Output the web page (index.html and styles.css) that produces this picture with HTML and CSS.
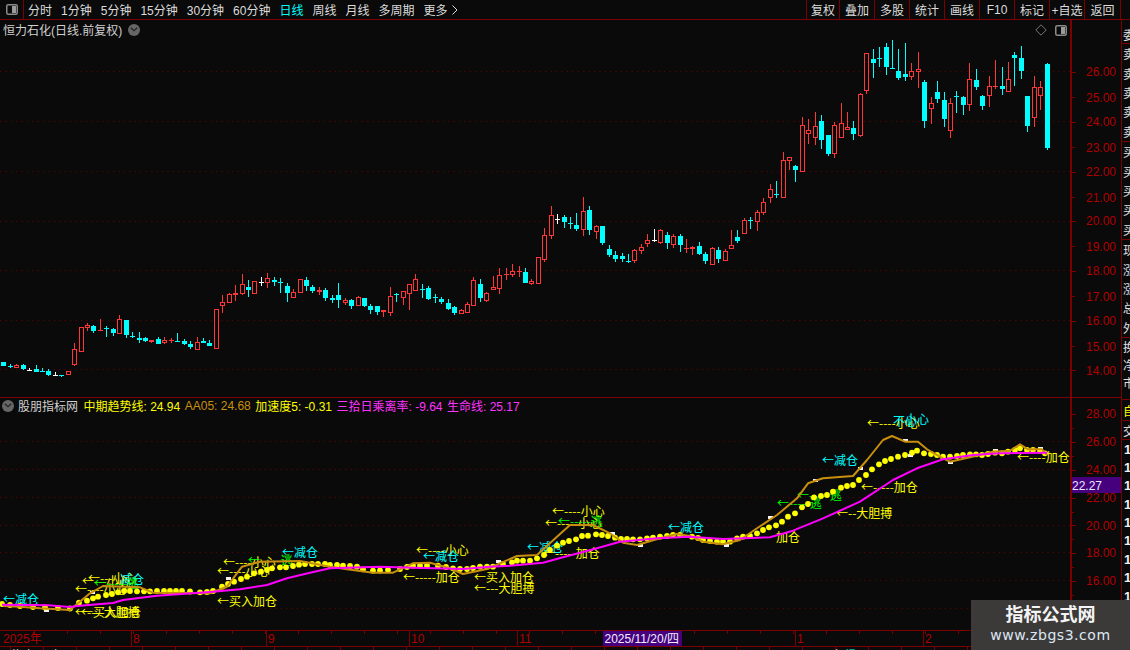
FILE: index.html
```html
<!DOCTYPE html>
<html lang="zh-CN">
<head>
<meta charset="utf-8">
<title>恒力石化 日线</title>
<link rel="stylesheet" href="styles.css">
</head>
<body>
<div class="app">
  <header class="topbar">
    <div class="logo-box">
      <svg class="panel-icon" viewBox="0 0 12 11"><rect x="0.75" y="0.75" width="10.5" height="9.5" rx="1.5" fill="none" stroke="#8a8a8a" stroke-width="1.5"/><rect x="6" y="2" width="4" height="7" fill="#9a9a9a"/></svg>
    </div>
    <nav class="periods">
      <span>分时</span><span>1分钟</span><span>5分钟</span><span>15分钟</span><span>30分钟</span><span>60分钟</span><span class="active">日线</span><span>周线</span><span>月线</span><span>多周期</span><span class="more">更多<svg class="more-arrow" viewBox="0 0 6 10"><path d="M0.5 0.5 L5 5 L0.5 9.5" fill="none" stroke="#dcdcdc"/></svg></span>
    </nav>
    <nav class="tools">
      <span>复权</span><span>叠加</span><span>多股</span><span>统计</span><span>画线</span><span>F10</span><span>标记</span><span>+自选</span><span class="back">返回</span>
    </nav>
  </header>
  <div class="workspace">
    <div class="charts">
      <section class="pane pane-main">
        <div class="plot">
          <svg id="candles" class="plot-svg" viewBox="0 20 1070 377"></svg>
          <div class="title-row">
            <span class="stock-name">恒力石化(日线.前复权)</span>
            <span class="round-icon"><svg viewBox="0 0 8 5"><path d="M0.8 0.8 L4 3.8 L7.2 0.8" fill="none" stroke="#222" stroke-width="1.2"/></svg></span>
          </div>
          <div class="plot-tools">
            <svg class="diamond" viewBox="0 0 12 12"><path d="M6 0.8 L11.2 6 L6 11.2 L0.8 6 Z" fill="none" stroke="#777"/></svg>
            <svg class="panel-icon" viewBox="0 0 12 11"><rect x="0.75" y="0.75" width="10.5" height="9.5" rx="1.5" fill="none" stroke="#8a8a8a" stroke-width="1.5"/><rect x="6" y="2" width="4" height="7" fill="#9a9a9a"/></svg>
          </div>
        </div>
        <svg id="axis-main" class="axis" viewBox="1072 20 49 377"></svg>
      </section>
      <section class="pane pane-indicator">
        <div class="plot">
          <svg id="indicator" class="plot-svg" viewBox="0 398 1070 232"></svg>
          <div class="legend">
            <span class="round-icon"><svg viewBox="0 0 8 5"><path d="M0.8 0.8 L4 3.8 L7.2 0.8" fill="none" stroke="#222" stroke-width="1.2"/></svg></span>
            <span class="legend-name">股朋指标网</span>
            <span class="yellow">中期趋势线: 24.94</span>
            <span class="gold">AA05: 24.68</span>
            <span class="yellow">加速度5: -0.31</span>
            <span class="magenta">三拾日乘离率: -9.64</span>
            <span class="magenta">生命线: 25.17</span>
          </div>
        </div>
        <svg id="axis-indicator" class="axis" viewBox="1072 398 49 232"></svg>
      </section>
      <svg id="timeline" class="timeline" viewBox="0 631 1121 15"></svg>
      <div class="footer">
        <svg id="footer-ticks" class="footer-svg" viewBox="0 647 1121 3"></svg>
      </div>
    </div>
    <aside class="side">
      <div class="side-group group-a"><span>委</span></div>
      <div class="side-group group-b"><span>卖</span><span>卖</span><span>卖</span><span>卖</span><span>卖</span></div>
      <div class="side-group group-b"><span>买</span><span>买</span><span>买</span><span>买</span><span>买</span></div>
      <div class="side-group group-b"><span>现</span><span>涨</span><span>涨</span><span>总</span><span>外</span></div>
      <div class="side-group group-c"><span>换</span><span>净</span><span>市</span></div>
      <div class="side-group group-d"><span class="yellow">自</span></div>
      <div class="side-group group-e"><span>交</span></div>
      <div class="side-group group-f"><span>1</span><span>1</span><span>1</span><span>1</span><span>1</span><span>1</span><span>1</span><span>1</span><span>1</span><span>1</span><span>1</span></div>
    </aside>
  </div>
  <div class="watermark">
    <div class="wm-title">指标公式网</div>
    <div class="wm-url">www.zbgs3.com</div>
  </div>
</div>
<script src="script.js"></script>
</body>
</html>
```
FILE: styles.css
```css
* { box-sizing: border-box; }
html, body { margin: 0; padding: 0; width: 1130px; height: 650px; overflow: hidden; background: #0a0a0a; }
body { font-family: "Liberation Sans", "Noto Sans CJK SC", sans-serif; color: #dcdcdc; }
.app { position: relative; width: 1130px; height: 650px; display: flex; flex-direction: column; }

.topbar { height: 20px; flex: none; display: flex; align-items: stretch; border-bottom: 1px solid #7c0000; }
.logo-box { width: 24px; flex: none; display: flex; align-items: center; justify-content: center; border-right: 1px solid #7c0000; }
.panel-icon { width: 12px; height: 11px; display: block; }
.periods { display: flex; align-items: center; gap: 9px; padding-left: 4px; font-size: 12px; flex: 1; }
.periods .active { color: #00ffff; }
.more { display: inline-flex; align-items: center; gap: 4px; }
.more-arrow { width: 6px; height: 10px; display: block; }
.tools { display: flex; align-items: stretch; font-size: 12px; margin-right: 9px; }
.tools span { width: 35px; display: flex; align-items: center; justify-content: center; border-left: 1px solid #7c0000; }
.tools .back { width: 37px; border-right: 1px solid #7c0000; }
.tools span:first-child { width: 33px; }

.workspace { flex: 1; display: flex; min-height: 0; }
.charts { width: 1121px; flex: none; display: flex; flex-direction: column; }
.pane { display: flex; flex: none; border-bottom: 1px solid #7c0000; }
.pane-main { height: 378px; }
.pane-indicator { height: 233px; }
.plot { position: relative; width: 1070px; flex: none; overflow: hidden; }
.plot-svg { display: block; width: 1070px; height: 100%; }
.axis { display: block; width: 51px; height: 100%; flex: none; border-left: 2px solid #7c0000; }

.title-row { position: absolute; left: 3px; top: 2px; height: 15px; display: flex; align-items: center; gap: 6px; font-size: 12px; color: #d0d0d0; }
.round-icon { width: 12px; height: 12px; border-radius: 50%; background: #666; display: flex; align-items: center; justify-content: center; flex: none; }
.round-icon svg { width: 8px; height: 5px; display: block; }
.plot-tools { position: absolute; right: 3px; top: 4px; display: flex; align-items: center; gap: 8px; }
.diamond { width: 12px; height: 12px; display: block; }

.legend { position: absolute; left: 2px; top: 0; height: 15px; display: flex; align-items: center; font-size: 12px; white-space: nowrap; gap: 4.5px; }
.legend-name { color: #d0d0d0; margin: 0 1px 0 -0.5px; }
.yellow { color: #ffff00; }
.gold { color: #c8900c; }
.magenta { color: #ff33ff; }

.timeline { display: block; width: 1121px; height: 16px; flex: none; border-bottom: 1px solid #7c0000; }
.footer { flex: 1; overflow: hidden; min-height: 0; }
.footer-svg { display: block; width: 1121px; height: 3px; }

.side { width: 9px; flex: none; border-left: 1px solid #7c0000; overflow: hidden; font-size: 12px; color: #e0e0e0; }
.side-group { display: flex; flex-direction: column; border-bottom: 1px solid #7c0000; padding-left: 1px; white-space: nowrap; }
.side-group span { display: flex; align-items: center; flex: 1; }
.group-a { height: 24px; padding-top: 6px; }
.group-b { height: 98px; }
.group-c { height: 62px; padding-bottom: 8px; }
.group-d { height: 21px; }
.group-e { height: 19px; }
.group-f { border-bottom: 0; height: 202px; font-weight: 700; font-size: 13px; color: #f0f0f0; }
.group-f span { padding-left: 1px; }

.watermark { position: absolute; right: 0; bottom: 0; width: 159px; height: 50px; background: #3c3a39; display: flex; flex-direction: column; align-items: center; padding-top: 4px; }
.wm-title { font-size: 18px; line-height: 22px; font-weight: 700; color: #f4f4f4; }
.wm-url { line-height: 19px; color: #dce8f4; letter-spacing: 0.55px; font-family: "DejaVu Sans", sans-serif; font-size: 14px; }

svg text { font-family: "Liberation Sans", "Noto Sans CJK SC", sans-serif; }
.axis-label { font-size: 12px; fill: #b00000; }
.axis-current { font-size: 12px; fill: #e8e8ff; }
svg text.signal { font-size: 12px; font-family: "Noto Sans CJK SC", sans-serif; }
.time-label { font-size: 12px; fill: #b00000; }
.time-current { font-size: 12px; fill: #f0f0ff; }
.clip-text { font-size: 11px; }
```
FILE: script.js
```js
var NS = 'http://www.w3.org/2000/svg';
function el(parent, name, attrs, text) {
  var n = document.createElementNS(NS, name);
  for (var k in attrs) n.setAttribute(k, attrs[k]);
  if (text) n.textContent = text;
  parent.appendChild(n);
  return n;
}
var GRID = '#6e0000', TICK = '#7c0000', BG = '#0a0a0a';
function dotted(svg, y, w) {
  el(svg, 'line', { x1: 0, x2: w, y1: y + 0.5, y2: y + 0.5, stroke: GRID, 'stroke-dasharray': '1 4.4' });
}

/* ---- candles: [type, bodyTop, bodyBottom, high, low] in screen rows measured from a base row, thirds of a pixel ---- */
var R = 'r', C = 'c', W = 'w';
var groups = [
  [300, [[C,186,198,186,198],[C,197,200,192,204],[R,195,203,192,205],[C,195,207,192,210],[W,210,212,203,212],[C,207,216,196,216],[C,213,215,205,216],[C,213,225,208,228],[W,225,227,216,228],[C,225,227,225,231],[R,214,224,214,224],[R,148,194,129,198],[R,82,155,82,155],[R,76,83,70,92],[C,78,93,75,99],[R,91,93,58,93],[C,84,86,78,110],[C,87,99,84,108],[R,58,102,45,102],[C,60,105,60,114],[C,108,111,96,114],[C,114,120,96,129],[C,114,123,111,126],[R,121,125,121,129],[C,117,132,111,132],[R,120,128,111,132],[R,120,122,114,129],[C,123,125,99,126],[C,123,132,117,135],[C,131,141,123,147],[R,127,149,111,150],[C,123,129,114,130],[C,129,137,120,138],[R,28,146,28,146]]],
  [190, [[R,337,349,316,369],[R,313,338,310,338],[R,309,314,285,333],[R,283,312,252,314],[C,291,300,270,321],[R,274,311,274,311],[W,275,277,261,288],[R,265,278,250,294],[C,270,275,261,288],[C,276,278,264,309],[C,288,308,279,336],[R,307,323,297,323],[R,268,308,268,308],[C,270,288,261,303],[C,291,303,285,309],[R,300,305,291,315],[C,300,324,294,333],[C,324,330,315,339],[C,315,330,279,354],[R,331,339,324,345],[C,330,348,327,357],[R,322,348,318,348],[C,324,348,324,351],[C,348,360,342,372],[C,348,366,348,375],[R,361,367,361,381],[R,319,369,291,378],[C,312,314,309,336],[R,304,323,304,345],[R,283,311,283,360],[R,268,302,252,302],[C,297,299,282,324],[C,294,327,288,330],[C,321,323,312,339],[C,327,336,321,342],[C,339,357,327,360],[C,351,369,348,375],[R,361,371,358,372],[R,343,368,336,369],[R,271,347,261,347],[C,282,324,267,336],[R,310,332,306,336],[R,292,299,258,299],[R,256,298,235,312]]],
  [120, [[R,463,466,444,480],[R,454,464,432,470],[R,454,456,438,470],[C,456,489,444,489],[R,483,492,476,495],[R,412,492,412,492],[R,346,419,324,426],[R,286,347,258,357],[W,296,298,282,312],[C,291,306,285,324],[C,310,312,291,327],[C,315,327,279,333],[R,274,330,231,348],[C,270,330,258,345],[R,318,335,315,357],[C,318,369,318,375],[C,387,405,375,411],[C,405,417,393,426],[C,408,417,399,426],[C,423,425,402,429],[R,391,423,387,429],[R,381,392,372,402],[R,361,372,342,381],[W,361,363,327,366],[R,331,369,327,372],[C,345,369,336,387],[R,349,375,342,384],[C,348,375,342,396],[R,385,387,357,399],[R,382,388,378,405],[C,378,402,366,405],[C,402,423,396,432],[R,385,435,382,435],[C,390,417,381,429],[R,393,423,387,423],[R,376,386,330,386],[C,351,363,330,369],[R,300,341,294,341],[C,300,302,291,327],[R,277,305,270,333],[R,247,278,234,285],[R,208,234,192,249],[C,222,224,183,234],[R,121,233,96,233],[R,112,122,112,150],[C,138,150,135,186]]],
  [0, [[R,376,515,351,515],[R,391,401,357,431],[R,379,415,336,435],[C,364,419,345,446],[C,406,462,406,468],[R,376,463,366,473],[R,370,415,309,415],[R,382,391,336,391],[C,385,401,364,419],[R,283,409,279,412],[R,160,274,160,282],[C,178,190,148,233],[C,175,178,142,202],[C,142,202,130,224],[C,205,207,121,208],[C,214,233,148,239],[C,223,230,130,242],[R,214,232,190,239],[R,208,217,157,265],[C,247,362,241,383],[R,310,328,292,373],[C,277,298,244,310],[C,301,358,277,380],[R,310,394,295,415],[C,289,291,274,340],[C,292,314,289,344],[R,238,316,190,334],[C,241,262,208,271],[C,289,319,286,331],[R,259,289,229,322],[R,259,261,181,268],[C,259,266,202,286],[R,238,277,187,277],[C,166,175,157,259],[C,175,212,139,238],[C,289,379,289,397],[R,262,355,229,382],[R,262,289,244,331],[C,193,445,190,449]]]
];
var COLORS = { r: '#ff3636', c: '#00ffff', w: '#ffffff' };
var candles = document.getElementById('candles');
[71, 121, 171, 221, 270, 320, 369].forEach(function (y) { dotted(candles, y, 1070); });
var layer = el(candles, 'g', { 'shape-rendering': 'crispEdges' });
var index = 0;
groups.forEach(function (g) {
  g[1].forEach(function (d) {
    var cx = Math.round(3.3 + index * 6.44), col = COLORS[d[0]];
    var top = Math.round(g[0] + d[1] / 3), bot = Math.round(g[0] + d[2] / 3);
    var hi = Math.round(g[0] + d[3] / 3), lo = Math.round(g[0] + d[4] / 3);
    if (bot <= top) bot = top + 1;
    if (lo > hi) el(layer, 'rect', { x: cx, y: hi, width: 1, height: lo - hi, fill: col });
    if (d[0] === 'r' && bot - top > 2) {
      el(layer, 'rect', { x: cx - 1.5, y: top + 0.5, width: 4, height: bot - top - 1, fill: BG, stroke: col });
    } else {
      el(layer, 'rect', { x: cx - 2, y: top, width: 5, height: bot - top, fill: col });
    }
    index++;
  });
});

/* ---- axes ---- */
function axis(id, ticks, labels) {
  var svg = document.getElementById(id);
  ticks.forEach(function (t) {
    el(svg, 'rect', { x: 1072, y: Math.round(t[0]), width: t[1], height: 1, fill: TICK, 'shape-rendering': 'crispEdges' });
  });
  labels.forEach(function (l) {
    el(svg, 'text', { x: 1086, y: l[0] + 4.5, 'class': 'axis-label' }, l[1]);
  });
  return svg;
}
var mainTicks = [], mainLabels = [];
[71.7, 96.7, 121.7, 146.7, 171.7, 196.7, 220.5, 245.5, 270.5, 295.5, 320.5, 345.5, 370].forEach(function (y, i) {
  mainTicks.push([y, i % 2 ? 3 : 4]);
  mainLabels.push([y + (i % 2 ? 1 : 0), (26 - i) + '.00']);
});
axis('axis-main', mainTicks, mainLabels);

var indTicks = [], indLabels = [];
[[413.5, '28.00'], [441.5, '26.00'], [469.5, '24.00'], [497.5, '22.00'], [525, '20.00'], [552.5, '18.00'], [580.5, '16.00']].forEach(function (p) {
  indTicks.push([p[0], 4]);
  indTicks.push([p[0] + 14, 2]);
  indLabels.push([p[0], p[1]]);
});
var axisInd = axis('axis-indicator', indTicks, indLabels);
el(axisInd, 'rect', { x: 1072, y: 477, width: 49, height: 16, fill: '#46007e' });
el(axisInd, 'text', { x: 1072, y: 490, 'class': 'axis-current' }, '22.27');

/* ---- indicator ---- */
var ind = document.getElementById('indicator');
[441, 469, 497, 525, 552, 580, 608].forEach(function (y) { dotted(ind, y, 1070); });

var signals = [
  ['#00ffff', 3, 599, '←减仓'],
  ['#ffff00', 88, 578, '←---小心'],
  ['#ffff00', 82, 581, '←---小心'],
  ['#00ffff', 120, 579, '减仓'],
  ['#ffff00', 75, 589, '←----小心'],
  ['#00ff00', 94, 583, '←-----逃'],
  ['#ffff00', 75, 612, '←----大胆搏'],
  ['#ffff00', 81, 612, '←买入加仓'],
  ['#ffff00', 223, 562, '←----小心'],
  ['#ffff00', 217, 571, '←----小心'],
  ['#00ff00', 248, 560, '←-----逃'],
  ['#00ffff', 282, 552, '←减仓'],
  ['#ffff00', 217, 601, '←买入加仓'],
  ['#ffff00', 416, 550, '←----小心'],
  ['#00ffff', 423, 556, '←减仓'],
  ['#ffff00', 403, 577, '←-----加仓'],
  ['#ffff00', 474, 577, '←买入加仓'],
  ['#ffff00', 474, 588, '←---大胆搏'],
  ['#ffff00', 552, 511, '←----小心'],
  ['#ffff00', 545, 523, '←-----小心'],
  ['#00ff00', 558, 521, '←-----逃'],
  ['#00ffff', 527, 547, '←减仓'],
  ['#ffff00', 543, 553, '←-----加仓'],
  ['#00ffff', 668, 527, '←减仓'],
  ['#ffff00', 776, 537, '加仓'],
  ['#ffff00', 867, 423, '←----小心'],
  ['#00ffff', 893, 421, '不心'],
  ['#00ffff', 905, 419, '小心'],
  ['#00ffff', 822, 460, '←减仓'],
  ['#ffff00', 861, 487, '←-----加仓'],
  ['#ffff00', 836, 513, '←--大胆搏'],
  ['#00ff00', 777, 503, '←-----逃'],
  ['#00ff00', 797, 495, '←-----逃'],
  ['#ffff00', 1017, 457, '←----加仓']
];
signals.forEach(function (s) {
  el(ind, 'text', { x: s[1], y: s[2] + 4.5, fill: s[0], 'class': 'signal' }, s[3]);
});

[[92, 592], [228, 578], [408, 565], [498, 561], [612, 533], [770, 517], [815, 480], [860, 468], [905, 440], [910, 455], [950, 462], [995, 450], [1040, 448], [46, 610], [640, 545], [726, 545]].forEach(function (p) {
  el(ind, 'rect', { x: p[0] - 2, y: p[1] - 1, width: 5, height: 3, fill: '#f2f2f2', 'shape-rendering': 'crispEdges' });
});

var dots = [[2,604],[10,605],[20,606],[33,607],[45,607.5],[58,608],[70,608.5],[79,602.7],[87,600.7],[93,598.3],[98,596.7],[106,595],[112,594],[118,592.3],[124,591],[130,591],[137,591.3],[144,591.3],[150,591.3],[157,591],[164,591],[170,591],[176,591],[182,591],[190,591.5],[200,592.3],[207,592],[213,591],[222,586.7],[228,584],[234,581.7],[241,579],[247,576.7],[254,573.3],[261,571.7],[267,570],[272,568.3],[280,567.3],[286,567.3],[293,566],[299,564.7],[305,564],[312,564],[318,564],[325,564],[330,565],[337,565],[343,565.7],[350,566],[357,566.7],[363,569.3],[373,570.7],[380,570.5],[388,570],[400,569],[407,567],[413,565.7],[420,565.7],[427,565.7],[438,565.7],[446,567],[453,568.3],[460,569],[467,569],[473,568],[480,566.7],[487,566.7],[493,566.7],[503,564],[512,562.3],[517,560.7],[523,560.7],[530,560.7],[537,558.3],[544,555],[550,550],[557,545.7],[563,542.7],[569,541],[576,539.3],[582,536],[588,535.7],[596,534.3],[602,535],[608,536],[615,537.7],[621,539],[627,539],[633,539.3],[640,539.3],[647,538.3],[653,537.7],[660,536.7],[667,536],[673,535],[680,535],[692,536.7],[698,538],[703,540],[710,541],[717,541.7],[723,541.7],[730,541.7],[737,538.3],[743,536.7],[750,536],[757,533.3],[763,530],[769,527.3],[776,525.3],[782,521.7],[788,516.7],[795,513.3],[802,507.3],[808,504],[814,497.3],[821,496],[827,495],[833,491.7],[841,487.7],[847,486],[853,485],[859,480],[866,475],[872,469.3],[879,464.3],[885,461],[891,459],[898,456.7],[905,455],[912,452.7],[917,450.7],[924,453.3],[931,454],[937,455],[943,456.7],[950,456.7],[957,456],[963,455],[970,454.3],[976,454.3],[982,455],[988,454],[995,452.7],[1002,453.3],[1008,451.7],[1015,450],[1020,448.3],[1027,450],[1033,450],[1040,450.7],[1045,453.3]];
dots.forEach(function (p) {
  el(ind, 'circle', { cx: p[0], cy: p[1], r: 2.9, fill: '#ffff00' });
});

function poly(points, color, width) {
  el(ind, 'polyline', { points: points.map(function (p) { return p.join(','); }).join(' '), fill: 'none', stroke: color, 'stroke-width': width, 'stroke-linejoin': 'round' });
}
poly([[3,606],[20,606.7],[40,608.3],[70,610],[78,603.3],[90,593.3],[103,586],[140,587.3],[153,592.7],[210,593.3],[227,586.7],[242,566.7],[260,561.7],[300,561],[330,566.7],[347,569.3],[373,572.7],[393,572.7],[413,563.3],[430,562.7],[450,568.3],[463,574],[487,569],[517,556],[537,555],[557,536.7],[570,525],[593,525],[610,533.3],[623,542.7],[637,545],[660,538.3],[677,534],[690,536],[703,541.7],[723,544.3],[740,540],[757,528.3],[777,515],[797,498.3],[808,483.3],[823,478.3],[853,476],[867,460],[883,440],[892,436],[905,441.7],[918,441.7],[927,449.3],[943,458.3],[950,461.7],[970,457.3],[993,451.7],[1010,450.7],[1020,444.3],[1028,449.3],[1042,449.3],[1047,455]], '#c88f0e', 2);
poly([[2,604.7],[48,605.3],[70,607],[77,606],[113,603],[123,600],[157,595.7],[213,591.7],[240,589.3],[267,585],[287,578.3],[310,572.7],[330,568.3],[380,566.7],[413,567.7],[463,569],[490,566.7],[510,565.7],[543,562.7],[563,557.3],[597,548.3],[620,541.7],[657,538.3],[690,536.7],[723,539],[770,537.3],[793,530.7],[823,518.3],[860,501.7],[893,480],[917,468.3],[943,459.3],[973,455],[1000,453.3],[1047,452.7]], '#ff00ff', 2);

/* ---- time axis ---- */
var tl = document.getElementById('timeline');
var months = [[131, '8'], [266, '9'], [409, '10'], [517, '11'], [795, '1'], [923, '2']];
for (var x = 34; x < 1121; x += 33) {
  el(tl, 'rect', { x: x, y: 631, width: 1, height: 3, fill: TICK, 'shape-rendering': 'crispEdges' });
}
el(tl, 'text', { x: 3, y: 643, 'class': 'time-label' }, '2025年');
months.forEach(function (m) {
  el(tl, 'rect', { x: m[0], y: 631, width: 1, height: 15, fill: TICK, 'shape-rendering': 'crispEdges' });
  el(tl, 'text', { x: m[0] + 2, y: 643, 'class': 'time-label' }, m[1]);
});
el(tl, 'rect', { x: 603, y: 631, width: 79, height: 15, fill: '#46007e' });
el(tl, 'text', { x: 604.5, y: 643, 'class': 'time-current' }, '2025/11/20/四');

var ft = document.getElementById('footer-ticks');
for (var fx = 10; fx < 1121; fx += 33) {
  el(ft, 'rect', { x: fx, y: 647, width: 1, height: 3, fill: TICK, 'shape-rendering': 'crispEdges' });
}
el(ft, 'text', { x: 12, y: 659, fill: '#e0e0e0', 'class': 'clip-text' }, '资金');
el(ft, 'text', { x: 50, y: 659, fill: '#e0e0e0', 'class': 'clip-text' }, '金');
el(ft, 'text', { x: 831, y: 659, fill: '#e0e0e0', 'class': 'clip-text' }, '金');
el(ft, 'text', { x: 845, y: 659, fill: '#00ffff', 'class': 'clip-text' }, '提示');
```
